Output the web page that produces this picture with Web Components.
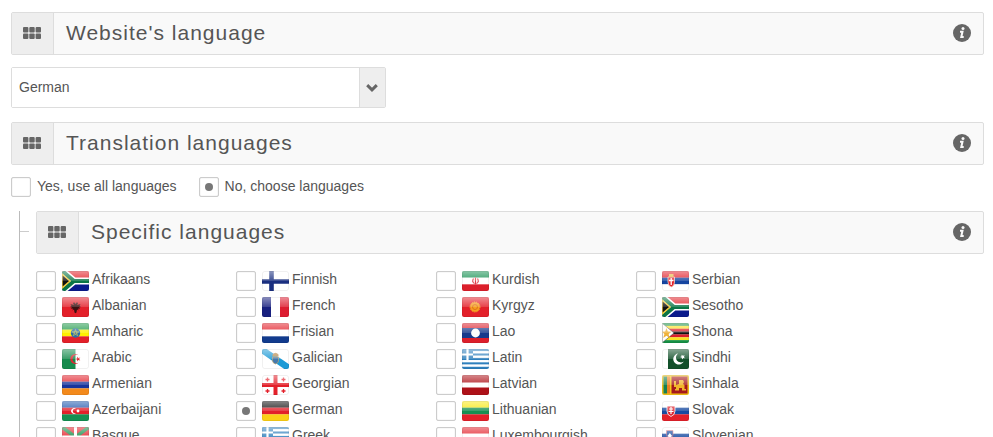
<!DOCTYPE html>
<html lang="en">
<head>
<meta charset="utf-8">
<title>Languages</title>
<style>
    body {
        margin: 0;
        padding: 12px 9px 12px 11px;
        background: #fff;
        color: #555;
        font: 14px/18px "Liberation Sans", Arial, sans-serif;
    }
</style>
</head>
<body>

<settings-page></settings-page>

<script>
const stripes = (...colors) => colors.map((c, i) =>
    `<rect y="${i * 20 / colors.length}" width="27" height="${20 / colors.length + 0.1}" fill="${c}"/>`).join('');

const southAfrica = `
    <path fill="#e21f26" d="M0 0h27v10H0z"/><path fill="#0a1a8c" d="M0 10h27v10H0z"/>
    <path d="M-1-1l13 11h16M-1 21l13-11" fill="none" stroke="#fff" stroke-width="7"/>
    <path d="M-1-1l13 11h16M-1 21l13-11" fill="none" stroke="#0b7546" stroke-width="4"/>
    <path d="M0 3l8 7-8 7z" fill="#111" stroke="#f0c83a" stroke-width="1.4"/>`;

const greece = stripes('#2f80bd', '#fff', '#2f80bd', '#fff', '#2f80bd', '#fff', '#2f80bd', '#fff', '#2f80bd') +
    `<path fill="#2f80bd" d="M0 0h11v11.1H0z"/><path stroke="#fff" stroke-width="2.2" d="M5.5 0v11M0 5.5h11"/>`;

const FLAGS = {
    za: southAfrica,
    al: `<path fill="#e3202a" d="M0 0h27v20H0z"/>
        <path fill="#3b1111" d="M13.5 7l-1.5-2-1 1.5 1 1.5-3.5-1 1 2-1.5 1 2 .5-1 1.5 2-.5-.5 2 1.5-1 .5 3 1 .8 1-.8.5-3 1.5 1-.5-2 2 .5-1-1.5 2-.5-1.5-1 1-2-3.5 1 1-1.5-1-1.5z"/>`,
    et: stripes('#219a4b', '#fff000', '#e3202a') +
        `<circle cx="13.5" cy="10" r="4.7" fill="#2b6fa8"/>
        <path d="M13.5 6.5l2.2 6.3-5.5-4h6.6l-5.5 4z" fill="none" stroke="#d9cf55" stroke-width=".6"/>`,
    dz: `<path fill="#fff" d="M0 0h27v20H0z"/><path fill="#168b4d" d="M0 0h13.5v20H0z"/>
        <path fill="#dc2833" d="M16.5 6.2a5 5 0 1 0 0 7.6 4.2 4.2 0 1 1 0-7.6zM13 10l2-.6.1-2 1.2 1.6 2-.5-1.2 1.5 1.2 1.6-2-.6-1.2 1.6v-2z"/>`,
    am: stripes('#e3202a', '#18349c', '#f38a1c'),
    az: stripes('#1f58ae', '#e3202a', '#159052') +
        `<path fill="#fff" d="M14.2 8a2.9 2.9 0 1 0 0 4 2.3 2.3 0 1 1 0-4z"/><circle cx="16" cy="10" r="1.4" fill="#fff"/>`,
    eu: `<path fill="#e3202a" d="M0 0h27v20H0z"/><path stroke="#138a46" stroke-width="3.5" d="M0 0l27 20M27 0L0 20"/>
        <path stroke="#fff" stroke-width="3" d="M13.5 0v20M0 10h27"/>`,
    fi: `<path fill="#fff" d="M0 0h27v20H0z"/><path stroke="#1a2f80" stroke-width="4.6" d="M9.5 0v20M0 10.5h27"/>`,
    fr: `<path fill="#fff" d="M0 0h27v20H0z"/><path fill="#18207f" d="M0 0h9v20H0z"/><path fill="#dd1c30" d="M18 0h9v20h-9z"/>`,
    nl: stripes('#e3202a', '#fff', '#123b8d'),
    gl: `<path fill="#fff" d="M0 0h27v20H0z"/><path stroke="#1c9ad6" stroke-width="6.5" d="M-1 0l29 20"/>
        <path fill="#b98d52" d="M10.5 5.5q3-3.5 6 0v2h-6z"/><path fill="#4579ad" stroke="#c0a36f" stroke-width=".7" d="M10.5 8h6v4q-.5 2.500-3 3-2.500-.5-3-3z"/>`,
    ge: `<path fill="#fff" d="M0 0h27v20H0z"/><path stroke="#e3202a" stroke-width="4" d="M13.5 0v20M0 10h27"/>
        <path stroke="#e3202a" stroke-width="1.3" d="M5.5 2.5v4M3.5 4.5h4M21.5 2.5v4M19.5 4.5h4M5.5 14v4M3.5 16h4M21.5 14v4M19.5 16h4"/>`,
    de: stripes('#111', '#e3202a', '#fbd016'),
    gr: greece,
    ir: stripes('#159052', '#fff', '#dc1f2b') +
        `<path d="M13.5 6.5v7M11.5 7.5q-2 3.5 1 5M15.5 7.5q2 3.5-1 5" fill="none" stroke="#e0414a" stroke-width="1.2"/>`,
    kg: `<path fill="#e3202a" d="M0 0h27v20H0z"/><circle cx="13" cy="10" r="4.8" fill="#f5a01f"/>
        <circle cx="13" cy="10" r="5" fill="none" stroke="#f5b52c" stroke-dasharray="1 1"/><circle cx="13" cy="10" r="2.5" fill="none" stroke="#e0701d"/>`,
    la: `<path fill="#dc1f2b" d="M0 0h27v20H0z"/><path fill="#173a8c" d="M0 5h27v10H0z"/><circle cx="13.5" cy="10" r="4.4" fill="#fff"/>`,
    lv: `<path fill="#ae1118" d="M0 0h27v20H0z"/><path fill="#fff" d="M0 7.5h27v5H0z"/>`,
    lt: stripes('#f8e80f', '#159052', '#e3202a'),
    lu: stripes('#e3202a', '#fff', '#35a4dc'),
    rs: stripes('#e3202a', '#1545a0', '#fff') +
        `<path fill="#e3202a" stroke="#f1d6c5" stroke-width=".8" d="M6 6h6.5v5q0 4-3.2 5Q6 15 6 11z"/><path fill="#e7b944" d="M7 3h4.5v3H7z"/>
        <path stroke="#fff" stroke-width="1.3" d="M9.2 7v7M7 9.5h4.5"/>`,
    zw: stripes('#159044', '#fbe021', '#dc1f2b', '#111', '#dc1f2b', '#fbe021', '#159044') +
        `<path fill="#fff" stroke="#333" stroke-width=".5" d="M0 0l12 10L0 20z"/>
        <path fill="#efb33b" d="M4.5 5l1.3 3.5 3.7.2L6.6 11l1 4-3.1-2.3L1.2 15l1.2-4L0 8.7l3.2-.2z"/>`,
    pk: `<path fill="#fff" d="M0 0h27v20H0z"/><path fill="#12502a" d="M6 0h21v20H6z"/>
        <path fill="#fff" d="M16 4.6a5.5 5.5 0 1 0 5.7 7.9A4.800 4.800 0 1 1 16 4.600zM18 8l1.400-.5.3-1.800 1.300 1.100 1.600-.5-.6 1.600.9 1.300-1.700-.1-1 1.400-.4-1.700z"/>`,
    lk: `<path fill="#f6c517" d="M0 0h27v20H0z"/><path fill="#168052" d="M1.5 1.5h3.5v17H1.5z"/><path fill="#e98122" d="M5 1.5h3v17H5z"/>
        <path fill="#a5191c" d="M9.5 1.5h16v17h-16z"/>
        <path fill="#f1b52a" d="M12 6h2v4l3-1V5h4l1 2-1 2 1.5 1v4H24v1.5h-4V13h-3v2.5h-4V14h1v-2h-2z"/>`,
    sk: stripes('#fff', '#174ba1', '#e3202a') +
        `<path fill="#dc2833" stroke="#fff" stroke-width=".8" d="M5 5h8v5q0 4-4 5.5Q5 14 5 10z"/><path stroke="#fff" stroke-width="1.2" d="M9 6v7M7 8h4M6.5 10.5h5"/>`,
    si: stripes('#fff', '#174ba1', '#e3202a') +
        `<path fill="#174ba1" stroke="#e86d72" stroke-width=".6" d="M4.5 3.5h6.5v4q0 3-3.2 4.5-3.300-1.500-3.300-4.500z"/><path fill="#fff" d="M5.5 9l2.3-3 2.3 3-2.3 2z"/>`
};

const LANGUAGES = [
    [['Afrikaans', 'za'], ['Albanian', 'al'], ['Amharic', 'et'], ['Arabic', 'dz'], ['Armenian', 'am'], ['Azerbaijani', 'az'], ['Basque', 'eu']],
    [['Finnish', 'fi'], ['French', 'fr'], ['Frisian', 'nl'], ['Galician', 'gl'], ['Georgian', 'ge'], ['German', 'de'], ['Greek', 'gr']],
    [['Kurdish', 'ir'], ['Kyrgyz', 'kg'], ['Lao', 'la'], ['Latin', 'gr'], ['Latvian', 'lv'], ['Lithuanian', 'lt'], ['Luxembourgish', 'lu']],
    [['Serbian', 'rs'], ['Sesotho', 'za'], ['Shona', 'zw'], ['Sindhi', 'pk'], ['Sinhala', 'lk'], ['Slovak', 'sk'], ['Slovenian', 'si']]
];

// shared by the radios and the tick boxes
const BOX_STYLE = `
    input {
        appearance: none;
        box-sizing: border-box;
        display: grid;
        place-items: center;
        flex: none;
        width: 20px;
        height: 20px;
        margin: 0;
        border: 1px solid #ccc;
        border-radius: 2px;
        background: #fff;
        box-shadow: inset 0 0 1px #bbb;
    }

    input:checked::before {
        content: '';
        width: 8px;
        height: 8px;
        border-radius: 50%;
        background: #777;
    }
`;

class PanelHeader extends HTMLElement {
    constructor() {
        super();
        this.attachShadow({ mode: 'open' });
        this.shadowRoot.innerHTML = `
            <style>
                :host {
                    display: flex;
                    box-sizing: border-box;
                    height: 43px;
                    border: 1px solid #ddd;
                    border-radius: 2px;
                    background: #f9f9f9;
                }

                button {
                    display: grid;
                    padding: 0;
                    border: 0;
                    background: none;
                }

                #handle {
                    width: 42px;
                    padding: 0 2px 2px 0;
                    place-content: center;
                    border-right: 1px solid #ddd;
                    background: #eee;
                }

                #info {
                    align-self: center;
                    margin-right: 12px;
                    padding-bottom: 2px;
                }

                h2 {
                    flex: 1;
                    margin: 0;
                    padding-left: 12px;
                    font-size: 21px;
                    font-weight: normal;
                    line-height: 40px;
                    letter-spacing: 1px;
                }
            </style>
            <button id="handle" type="button" aria-label="Move">
                <svg width="18" height="12" fill="#666">
                    <rect width="5.4" height="5.4" rx="1"/><rect x="6.3" width="5.4" height="5.4" rx="1"/><rect x="12.6" width="5.4" height="5.4" rx="1"/>
                    <rect y="6.5" width="5.4" height="5.4" rx="1"/><rect x="6.3" y="6.5" width="5.4" height="5.4" rx="1"/><rect x="12.6" y="6.5" width="5.4" height="5.4" rx="1"/>
                </svg>
            </button>
            <h2><slot></slot></h2>
            <button id="info" type="button" aria-label="Information">
                <svg width="18" height="18">
                    <circle cx="9" cy="9" r="9" fill="#666"/>
                    <circle cx="10" cy="4.6" r="1.5" fill="#f9f9f9"/>
                    <path d="M7 7.7h2.5L8.3 13h2.4" fill="none" stroke="#f9f9f9" stroke-width="2"/>
                </svg>
            </button>
        `;
    }
}

class LanguageSelect extends HTMLElement {
    constructor() {
        super();
        this.attachShadow({ mode: 'open' });
        this.shadowRoot.innerHTML = `
            <style>
                :host {
                    display: grid;
                    grid-template-columns: 1fr 26px;
                    box-sizing: border-box;
                    max-width: 375px;
                    height: 41px;
                    border: 1px solid #ddd;
                    border-radius: 2px;
                }

                select {
                    grid-area: 1 / 1 / 2 / 3;
                    appearance: none;
                    padding: 0 33px 2px 7px;
                    border: 0;
                    background: #fff;
                    color: inherit;
                    font: inherit;
                }

                #arrow {
                    grid-area: 1 / 2;
                    display: grid;
                    place-content: center;
                    padding-right: 2px;
                    border-left: 1px solid #ddd;
                    background: #eee;
                    pointer-events: none;
                }
            </style>
            <select aria-label="Website's language"></select>
            <span id="arrow">
                <svg width="12" height="8"><path d="M1.2 1.2L6 5.8l4.8-4.6" fill="none" stroke="#666" stroke-width="3"/></svg>
            </span>
        `;

        const select = this.shadowRoot.querySelector('select');
        LANGUAGES.flat().forEach(([name]) => {
            select.add(new Option(name, name, false, name === this.getAttribute('value')));
        });
    }
}

class LanguageMode extends HTMLElement {
    constructor() {
        super();
        this.attachShadow({ mode: 'open' });
        this.shadowRoot.innerHTML = `
            <style>
                :host {
                    display: flex;
                    flex-wrap: wrap;
                    gap: 4px 22px;
                }

                label {
                    display: flex;
                    gap: 6px;
                }

                ${BOX_STYLE}
            </style>
            <label><input type="radio" name="mode" value="all"><slot name="all"></slot></label>
            <label><input type="radio" name="mode" value="some" checked><slot name="some"></slot></label>
        `;
    }
}

class FlagIcon extends HTMLElement {
    connectedCallback() {
        if (this.shadowRoot) return;
        this.attachShadow({ mode: 'open' });
        this.shadowRoot.innerHTML = `
            <style>
                :host {
                    display: block;
                    flex: none;
                    width: 27px;
                    height: 20px;
                    border-radius: 2px;
                    overflow: hidden;
                }

                svg {
                    display: block;
                }
            </style>
            <svg width="27" height="20" viewBox="0 0 27 20" aria-hidden="true">
                <defs>
                    <linearGradient id="gloss" x2="0" y2="1">
                        <stop offset="0" stop-color="#fff" stop-opacity=".5"/>
                        <stop offset="1" stop-color="#fff" stop-opacity=".15"/>
                    </linearGradient>
                </defs>
                ${FLAGS[this.getAttribute('country')]}
                <rect width="27" height="10" fill="url(#gloss)"/>
                <rect x=".5" y=".5" width="26" height="19" rx="2" fill="none" stroke="#000" stroke-opacity=".06"/>
            </svg>
        `;
    }
}

class LanguageOption extends HTMLElement {
    connectedCallback() {
        if (this.shadowRoot) return;
        this.attachShadow({ mode: 'open' });
        this.shadowRoot.innerHTML = `
            <style>
                :host {
                    display: block;
                }

                label {
                    display: flex;
                    height: 26px;
                    line-height: 16px;
                }

                flag-icon {
                    margin: 0 3px 0 6px;
                }

                ${BOX_STYLE}
            </style>
            <label>
                <input type="checkbox" ${this.hasAttribute('checked') ? 'checked' : ''}>
                <flag-icon country="${this.getAttribute('country')}"></flag-icon>
                <slot></slot>
            </label>
        `;
    }
}

class LanguageList extends HTMLElement {
    constructor() {
        super();
        this.attachShadow({ mode: 'open' });
        this.shadowRoot.innerHTML = `
            <style>
                :host {
                    display: grid;
                    grid-template-columns: repeat(auto-fill, 200px);
                    margin-top: 17px;
                }
            </style>
            ${LANGUAGES.map(column => `<div>${column.map(([name, country]) =>
                `<language-option country="${country}" ${name === 'German' ? 'checked' : ''}>${name}</language-option>`).join('')}</div>`).join('')}
        `;
    }
}

// nested settings, hung on a branch line at the left
class SubPanel extends HTMLElement {
    constructor() {
        super();
        this.attachShadow({ mode: 'open' });
        this.shadowRoot.innerHTML = `
            <style>
                :host {
                    display: grid;
                    grid-template-columns: 9px 1fr;
                    column-gap: 7px;
                    margin-left: 8px;
                    border-left: 1px solid #bbb;
                }

                #branch {
                    height: 20px;
                    border-bottom: 1px solid #ccc;
                }
            </style>
            <div id="branch"></div>
            <div><slot></slot></div>
        `;
    }
}

class SettingsPage extends HTMLElement {
    constructor() {
        super();
        this.attachShadow({ mode: 'open' });
        this.shadowRoot.innerHTML = `
            <style>
                :host {
                    display: block;
                }

                language-select,
                language-mode {
                    margin: 12px 0 14px;
                }
            </style>
            <panel-header>Website's language</panel-header>
            <language-select value="German"></language-select>
            <panel-header>Translation languages</panel-header>
            <language-mode>
                <span slot="all">Yes, use all languages</span>
                <span slot="some">No, choose languages</span>
            </language-mode>
            <sub-panel>
                <panel-header>Specific languages</panel-header>
                <language-list></language-list>
            </sub-panel>
        `;
    }
}

customElements.define('panel-header', PanelHeader);
customElements.define('language-select', LanguageSelect);
customElements.define('language-mode', LanguageMode);
customElements.define('flag-icon', FlagIcon);
customElements.define('language-option', LanguageOption);
customElements.define('language-list', LanguageList);
customElements.define('sub-panel', SubPanel);
customElements.define('settings-page', SettingsPage);
</script>
</body>
</html>
